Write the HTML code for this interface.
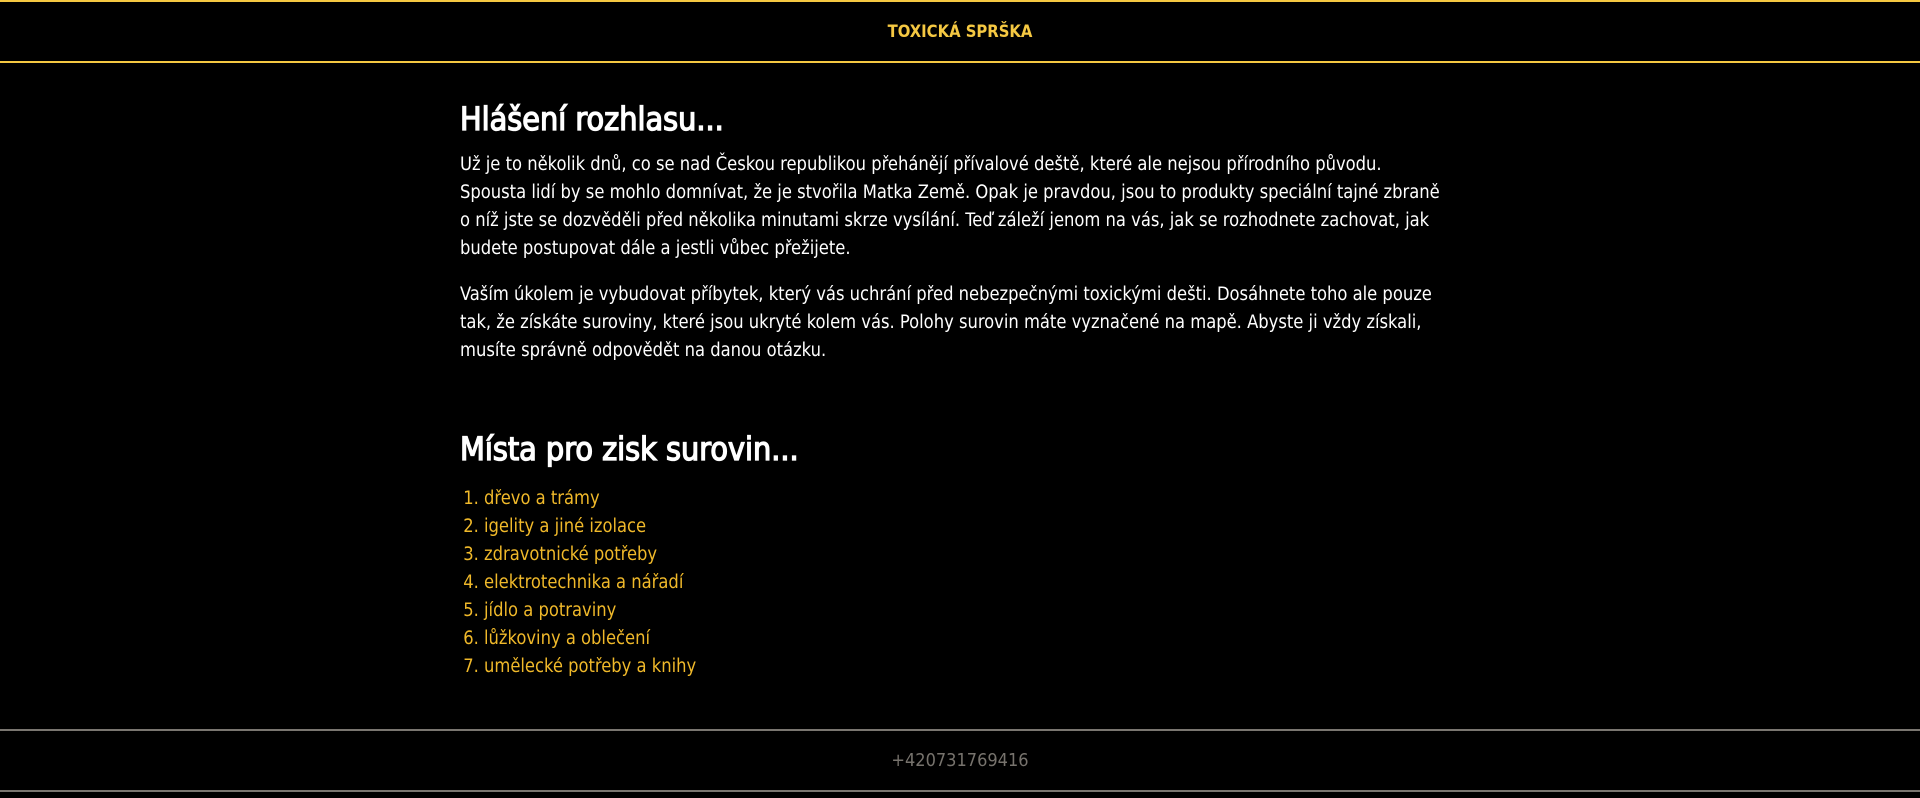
<!DOCTYPE html>
<html><head><meta charset="utf-8"><style>
html,body{margin:0;padding:0;background:#000;width:1920px;height:798px;overflow:hidden}
body{font-family:"DejaVu Sans Condensed","DejaVu Sans","Liberation Sans",sans-serif;font-stretch:condensed;color:#fff;position:relative}
.hdr{position:absolute;left:0;top:0;width:1920px;height:59px;border-top:2px solid #f5c842;border-bottom:2px solid #f5c842}
.hdr div{text-align:center;line-height:59px;color:#f5c842;font-weight:bold;font-size:16.5px}
.c{position:absolute;left:460px;width:1000px;white-space:nowrap}
h1,h2{margin:0;font-size:32px;font-weight:normal;line-height:40px;position:absolute;left:460px;-webkit-text-stroke:1.3px #fff}
p{margin:0;font-size:18.2px;line-height:28px}
ol{margin:0;padding:0 0 0 24px;font-size:18.2px;line-height:28px;color:#f0b92a}
.f1{position:absolute;left:0;top:729px;width:1920px;height:2px;background:#7a7670}
.f2{position:absolute;left:0;top:790px;width:1920px;height:2px;background:#7a7670}
.ph{position:absolute;left:0;width:1920px;top:747px;text-align:center;color:#77736d;font-size:18px;line-height:28px}
</style></head><body>
<div class="hdr"><div>TOXICKÁ SPRŠKA</div></div>
<h1 style="top:99px">Hlášení rozhlasu...</h1>
<div class="c" style="top:151px"><p>Už je to několik dnů, co se nad Českou republikou přehánějí přívalové deště, které ale nejsou přírodního původu.<br>Spousta lidí by se mohlo domnívat, že je stvořila Matka Země. Opak je pravdou, jsou to produkty speciální tajné zbraně<br>o níž jste se dozvěděli před několika minutami skrze vysílání. Teď záleží jenom na vás, jak se rozhodnete zachovat, jak<br>budete postupovat dále a jestli vůbec přežijete.</p></div>
<div class="c" style="top:281px"><p>Vaším úkolem je vybudovat příbytek, který vás uchrání před nebezpečnými toxickými dešti. Dosáhnete toho ale pouze<br>tak, že získáte suroviny, které jsou ukryté kolem vás. Polohy surovin máte vyznačené na mapě. Abyste ji vždy získali,<br>musíte správně odpovědět na danou otázku.</p></div>
<h2 style="top:429px">Místa pro zisk surovin...</h2>
<div class="c" style="top:485px"><ol>
<li>dřevo a trámy</li><li>igelity a jiné izolace</li><li>zdravotnické potřeby</li><li>elektrotechnika a nářadí</li><li>jídlo a potraviny</li><li>lůžkoviny a oblečení</li><li>umělecké potřeby a knihy</li></ol></div>
<div class="f1"></div>
<div class="ph">+420731769416</div>
<div class="f2"></div>
</body></html>
